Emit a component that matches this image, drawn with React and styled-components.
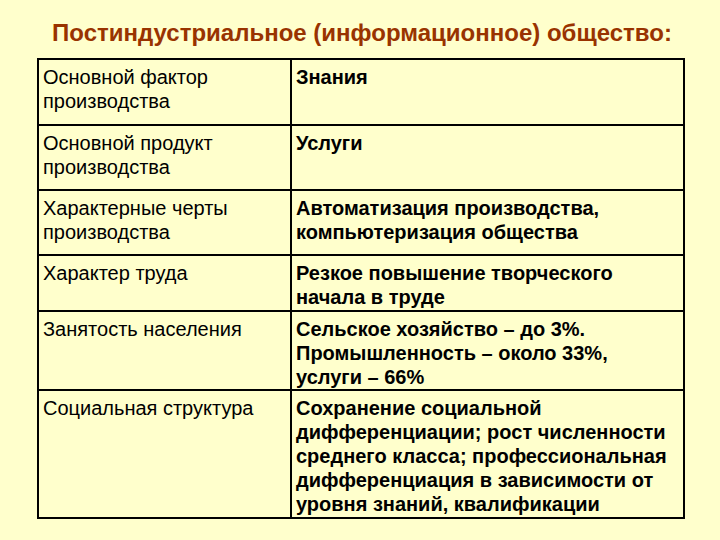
import React from 'react';
import styled, { createGlobalStyle } from 'styled-components';

const GlobalStyle = createGlobalStyle`
  html, body {
    margin: 0;
    padding: 0;
    background: #ffffcc;
  }
  body {
    font-family: "Liberation Sans", Arial, sans-serif;
  }
`;

const Page = styled.div`
  width: 720px;
  height: 540px;
  background: #ffffcc;
  display: flex;
  flex-direction: column;
  align-items: center;
`;

const Title = styled.h1`
  margin: 19px 0 11px 4px;
  font-size: 24px;
  line-height: 28px;
  font-weight: bold;
  color: #993300;
  text-align: center;
`;

const Table = styled.div`
  width: 648px;
  margin-left: 2px;
  display: grid;
  grid-template-columns: 251px 1fr;
  grid-template-rows: 64px 65px 65px 56px 79px 128px;
  border: 2px solid #000;
  box-sizing: border-box;
`;

const Cell = styled.div`
  padding: 5px 4px 0 4px;
  font-size: 20px;
  line-height: 24px;
  color: #000;
  font-weight: ${props => (props.$bold ? 'bold' : 'normal')};
  border-left: ${props => (props.$bold ? '2px solid #000' : 'none')};
  border-top: ${props => (props.$first ? 'none' : '2px solid #000')};
`;

const Line = styled.span`
  display: block;
  white-space: nowrap;
`;

const rows = [
  [['Основной фактор', 'производства'], ['Знания']],
  [['Основной продукт', 'производства'], ['Услуги']],
  [['Характерные черты', 'производства'], ['Автоматизация производства,', 'компьютеризация общества']],
  [['Характер труда'], ['Резкое повышение творческого', 'начала в труде']],
  [['Занятость населения'], ['Сельское хозяйство – до 3%.', 'Промышленность – около 33%,', 'услуги – 66%']],
  [
    ['Социальная структура'],
    [
      'Сохранение социальной',
      'дифференциации; рост численности',
      'среднего класса; профессиональная',
      'дифференциация в зависимости от',
      'уровня знаний, квалификации',
    ],
  ],
];

export default function App() {
  return (
    <Page>
      <GlobalStyle />
      <Title>Постиндустриальное (информационное) общество:</Title>
      <Table>
        {rows.map(([label, value], i) => (
          <React.Fragment key={i}>
            <Cell $first={i === 0}>
              {label.map((part, j) => (
                <Line key={j}>{part}</Line>
              ))}
            </Cell>
            <Cell $first={i === 0} $bold>
              {value.map((part, j) => (
                <Line key={j}>{part}</Line>
              ))}
            </Cell>
          </React.Fragment>
        ))}
      </Table>
    </Page>
  );
}
